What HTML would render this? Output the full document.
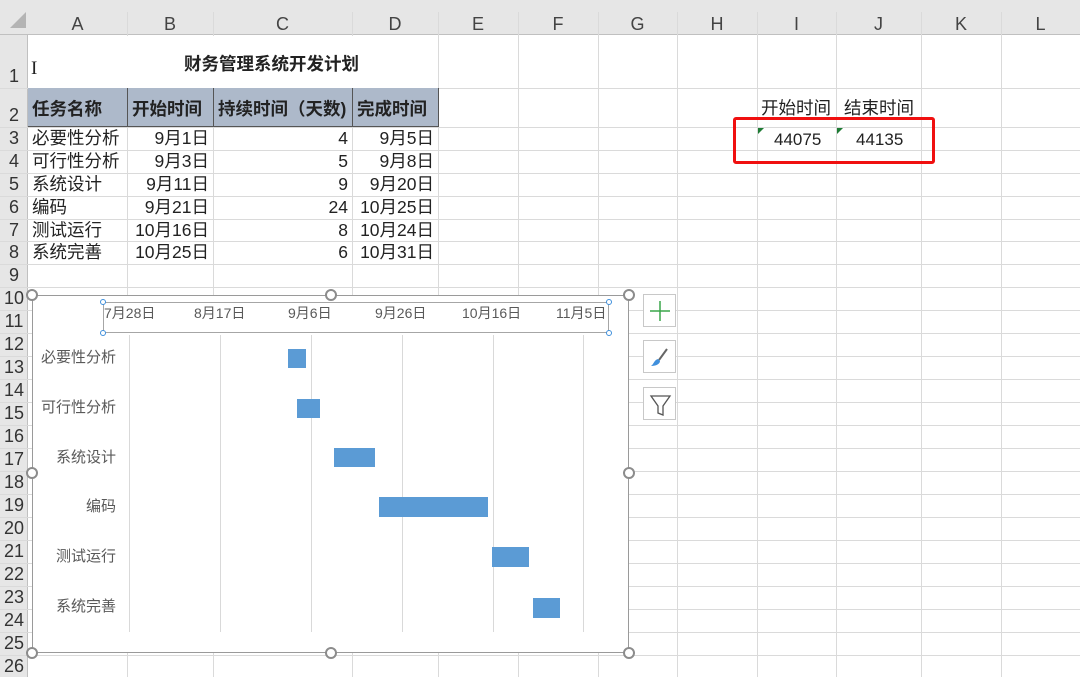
<!DOCTYPE html>
<html><head><meta charset="utf-8"><style>
*{margin:0;padding:0;box-sizing:border-box}
body{width:1080px;height:677px;overflow:hidden;background:#fff;position:relative;font-family:"Liberation Sans","Noto Sans CJK SC",sans-serif;color:#222}
div,span{position:absolute}
.v{width:1px;background:#dadada}
.h{height:1px;background:#dadada}
.ch{top:12px;height:22px;font-size:18px;color:#444;text-align:center;line-height:24px}
.rh{left:0;width:28px;font-size:18px;color:#333;text-align:center}
.t{font-size:17.5px;line-height:23px;white-space:nowrap;color:#222}
.r{text-align:right}
.hd{background:#adb9ca;font-weight:bold;font-size:17.5px;line-height:22px;padding-left:4px;border-right:1px solid #555;top:88px;height:39px;padding-top:10px;white-space:nowrap}
.lab{font-size:15px;color:#595959;width:100px;text-align:right}
.bar{background:#5b9bd5}
.g{width:1px;background:#d9d9d9;top:335px;height:297px}
.hn{width:12px;height:12px;border:2px solid #8c8c8c;border-radius:50%;background:#fff}
.sm{width:6px;height:6px;border:1px solid #3f8fdc;border-radius:50%;background:#fff}
.btn{left:643px;width:33px;height:33px;border:1px solid #c8c8c8;background:#fff}
.ax{font-size:14px;color:#595959;top:303px}
</style></head><body>
<div style="left:0;top:0;width:1080px;height:35px;background:#e6e6e6;border-bottom:1px solid #c0c0c0"></div>
<div style="left:0;top:35px;width:28px;height:642px;background:#e6e6e6;border-right:1px solid #c0c0c0"></div>
<div style="left:10px;top:12px;width:0;height:0;border-left:16px solid transparent;border-bottom:16px solid #b4b4b4"></div>
<div class="v" style="left:127px;top:12px;height:665px"></div>
<div class="v" style="left:213px;top:12px;height:665px"></div>
<div class="v" style="left:352px;top:12px;height:665px"></div>
<div class="v" style="left:438px;top:12px;height:665px"></div>
<div class="v" style="left:518px;top:12px;height:665px"></div>
<div class="v" style="left:598px;top:12px;height:665px"></div>
<div class="v" style="left:677px;top:12px;height:665px"></div>
<div class="v" style="left:757px;top:12px;height:665px"></div>
<div class="v" style="left:836px;top:12px;height:665px"></div>
<div class="v" style="left:921px;top:12px;height:665px"></div>
<div class="v" style="left:1001px;top:12px;height:665px"></div>
<div style="left:29px;top:36px;width:408px;height:52px;background:#fff"></div>
<div class="h" style="left:0;width:1080px;top:88px"></div>
<div class="h" style="left:0;width:1080px;top:127px"></div>
<div class="h" style="left:0;width:1080px;top:150px"></div>
<div class="h" style="left:0;width:1080px;top:173px"></div>
<div class="h" style="left:0;width:1080px;top:196px"></div>
<div class="h" style="left:0;width:1080px;top:219px"></div>
<div class="h" style="left:0;width:1080px;top:241px"></div>
<div class="h" style="left:0;width:1080px;top:264px"></div>
<div class="h" style="left:0;width:1080px;top:287px"></div>
<div class="h" style="left:0;width:1080px;top:310px"></div>
<div class="h" style="left:0;width:1080px;top:333px"></div>
<div class="h" style="left:0;width:1080px;top:356px"></div>
<div class="h" style="left:0;width:1080px;top:379px"></div>
<div class="h" style="left:0;width:1080px;top:402px"></div>
<div class="h" style="left:0;width:1080px;top:425px"></div>
<div class="h" style="left:0;width:1080px;top:448px"></div>
<div class="h" style="left:0;width:1080px;top:471px"></div>
<div class="h" style="left:0;width:1080px;top:494px"></div>
<div class="h" style="left:0;width:1080px;top:517px"></div>
<div class="h" style="left:0;width:1080px;top:540px"></div>
<div class="h" style="left:0;width:1080px;top:563px"></div>
<div class="h" style="left:0;width:1080px;top:586px"></div>
<div class="h" style="left:0;width:1080px;top:609px"></div>
<div class="h" style="left:0;width:1080px;top:632px"></div>
<div class="h" style="left:0;width:1080px;top:655px"></div>
<div class="ch" style="left:28px;width:99px">A</div>
<div class="ch" style="left:127px;width:86px">B</div>
<div class="ch" style="left:213px;width:139px">C</div>
<div class="ch" style="left:352px;width:86px">D</div>
<div class="ch" style="left:438px;width:80px">E</div>
<div class="ch" style="left:518px;width:80px">F</div>
<div class="ch" style="left:598px;width:79px">G</div>
<div class="ch" style="left:677px;width:80px">H</div>
<div class="ch" style="left:757px;width:79px">I</div>
<div class="ch" style="left:836px;width:85px">J</div>
<div class="ch" style="left:921px;width:80px">K</div>
<div class="ch" style="left:1001px;width:79px">L</div>
<div class="rh" style="top:66px">1</div>
<div class="rh" style="top:105px">2</div>
<div class="rh" style="top:128px">3</div><div class="rh" style="top:151px">4</div><div class="rh" style="top:174px">5</div><div class="rh" style="top:197px">6</div><div class="rh" style="top:220px">7</div><div class="rh" style="top:242px">8</div><div class="rh" style="top:265px">9</div>
<div class="rh" style="top:288px">10</div><div class="rh" style="top:311px">11</div><div class="rh" style="top:334px">12</div><div class="rh" style="top:357px">13</div><div class="rh" style="top:380px">14</div><div class="rh" style="top:403px">15</div><div class="rh" style="top:426px">16</div><div class="rh" style="top:449px">17</div><div class="rh" style="top:472px">18</div><div class="rh" style="top:495px">19</div><div class="rh" style="top:518px">20</div><div class="rh" style="top:541px">21</div><div class="rh" style="top:564px">22</div><div class="rh" style="top:587px">23</div><div class="rh" style="top:610px">24</div><div class="rh" style="top:633px">25</div><div class="rh" style="top:656px">26</div>
<div style="left:184px;top:51px;font-size:17.5px;font-weight:bold;white-space:nowrap">财务管理系统开发计划</div>
<div style="left:31px;top:58px;font-size:19px;font-family:'Liberation Serif',serif">I</div>
<div class="hd" style="left:28px;width:100px">任务名称</div>
<div class="hd" style="left:128px;width:86px">开始时间</div>
<div class="hd" style="left:214px;width:139px">持续时间（天数)</div>
<div class="hd" style="left:353px;width:86px">完成时间</div>
<div style="left:28px;top:126px;width:410px;height:1px;background:#555"></div>
<div class="t" style="left:32px;top:127px">必要性分析</div><div class="t r" style="left:127px;width:82px;top:127px">9月1日</div><div class="t r" style="left:213px;width:135px;top:127px">4</div><div class="t r" style="left:352px;width:82px;top:127px">9月5日</div>
<div class="t" style="left:32px;top:150px">可行性分析</div><div class="t r" style="left:127px;width:82px;top:150px">9月3日</div><div class="t r" style="left:213px;width:135px;top:150px">5</div><div class="t r" style="left:352px;width:82px;top:150px">9月8日</div>
<div class="t" style="left:32px;top:173px">系统设计</div><div class="t r" style="left:127px;width:82px;top:173px">9月11日</div><div class="t r" style="left:213px;width:135px;top:173px">9</div><div class="t r" style="left:352px;width:82px;top:173px">9月20日</div>
<div class="t" style="left:32px;top:196px">编码</div><div class="t r" style="left:127px;width:82px;top:196px">9月21日</div><div class="t r" style="left:213px;width:135px;top:196px">24</div><div class="t r" style="left:352px;width:82px;top:196px">10月25日</div>
<div class="t" style="left:32px;top:219px">测试运行</div><div class="t r" style="left:127px;width:82px;top:219px">10月16日</div><div class="t r" style="left:213px;width:135px;top:219px">8</div><div class="t r" style="left:352px;width:82px;top:219px">10月24日</div>
<div class="t" style="left:32px;top:241px">系统完善</div><div class="t r" style="left:127px;width:82px;top:241px">10月25日</div><div class="t r" style="left:213px;width:135px;top:241px">6</div><div class="t r" style="left:352px;width:82px;top:241px">10月31日</div>
<div class="t" style="left:761px;top:97px">开始时间</div>
<div class="t" style="left:844px;top:97px">结束时间</div>
<div style="left:758px;top:128px;width:0;height:0;border-top:6px solid #1e7b34;border-right:6px solid transparent"></div>
<div style="left:837px;top:128px;width:0;height:0;border-top:6px solid #1e7b34;border-right:6px solid transparent"></div>
<div class="t" style="left:774px;top:128px;font-size:17px">44075</div>
<div class="t" style="left:856px;top:128px;font-size:17px">44135</div>
<div style="left:733px;top:117px;width:202px;height:47px;border:3px solid #f01010;border-radius:3px"></div>
<div style="left:32px;top:295px;width:597px;height:358px;background:#fff;border:1px solid #9a9a9a"></div>
<div class="g" style="left:129px"></div><div class="g" style="left:220px"></div><div class="g" style="left:311px"></div><div class="g" style="left:402px"></div><div class="g" style="left:493px"></div><div class="g" style="left:583px"></div>
<div style="left:103px;top:302px;width:506px;height:31px;border:1px solid #a6a6a6;background:#fff"></div>
<div class="ax" style="left:104px">7月28日</div>
<div class="ax" style="left:194px">8月17日</div>
<div class="ax" style="left:288px">9月6日</div>
<div class="ax" style="left:375px">9月26日</div>
<div class="ax" style="left:462px">10月16日</div>
<div class="ax" style="left:556px">11月5日</div>
<div class="sm" style="left:100px;top:299px"></div><div class="sm" style="left:606px;top:299px"></div><div class="sm" style="left:100px;top:330px"></div><div class="sm" style="left:606px;top:330px"></div>
<div class="lab t" style="left:16px;top:346px">必要性分析</div>
<div class="lab t" style="left:16px;top:396px">可行性分析</div>
<div class="lab t" style="left:16px;top:446px">系统设计</div>
<div class="lab t" style="left:16px;top:495px">编码</div>
<div class="lab t" style="left:16px;top:545px">测试运行</div>
<div class="lab t" style="left:16px;top:595px">系统完善</div>
<div class="bar" style="left:288px;top:349px;width:18px;height:19px"></div>
<div class="bar" style="left:297px;top:399px;width:23px;height:19px"></div>
<div class="bar" style="left:334px;top:448px;width:41px;height:19px"></div>
<div class="bar" style="left:379px;top:497px;width:109px;height:20px"></div>
<div class="bar" style="left:492px;top:547px;width:37px;height:20px"></div>
<div class="bar" style="left:533px;top:598px;width:27px;height:20px"></div>
<div class="hn" style="left:26px;top:289px"></div><div class="hn" style="left:325px;top:289px"></div><div class="hn" style="left:623px;top:289px"></div>
<div class="hn" style="left:26px;top:467px"></div><div class="hn" style="left:623px;top:467px"></div>
<div class="hn" style="left:26px;top:647px"></div><div class="hn" style="left:325px;top:647px"></div><div class="hn" style="left:623px;top:647px"></div>
<div class="btn" style="top:294px"><svg width="33" height="33" style="position:absolute;left:0;top:0"><path d="M16 6V26M6 16H26" stroke="#3aa64a" stroke-width="1.5"/></svg></div>
<div class="btn" style="top:340px"><svg width="33" height="33" style="position:absolute;left:0;top:0"><path d="M23 8L15 19" stroke="#666" stroke-width="2"/><path d="M14 18C10 19 10 23 7 25C12 25 16 23 16 20Z" fill="#3f8fdc"/></svg></div>
<div class="btn" style="top:387px"><svg width="33" height="33" style="position:absolute;left:0;top:0"><path d="M7 8H26L19 18V27L14 25V18Z" fill="none" stroke="#555" stroke-width="1.3"/></svg></div>
</body></html>
